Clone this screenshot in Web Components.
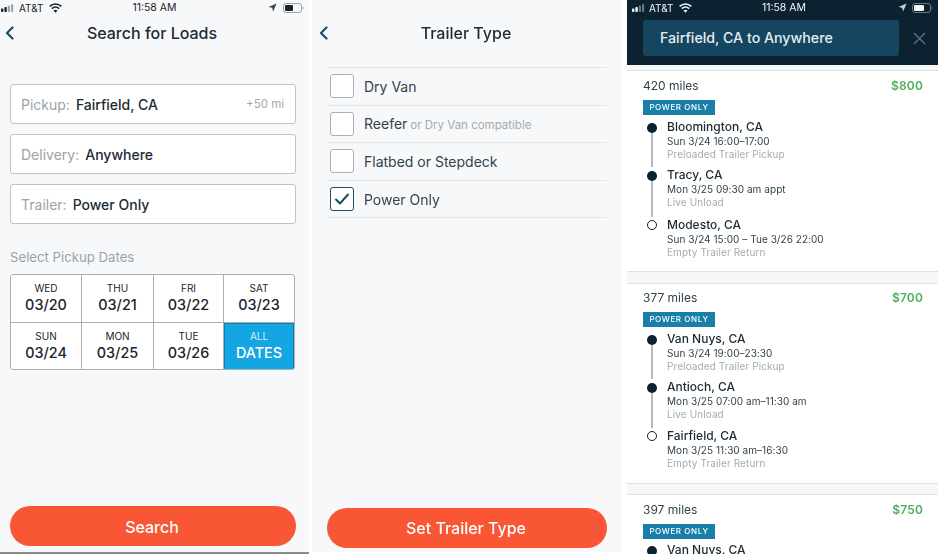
<!DOCTYPE html>
<html><head><meta charset="utf-8"><title>Loads</title>
<style>
html,body{margin:0;padding:0;background:#fff;}
body{width:938px;height:554px;overflow:hidden;font-family:Inter,"Liberation Sans",sans-serif;color:#1c2b33;}
app-row{display:flex;width:938px;height:554px;filter:blur(.35px);}
</style></head><body>
<app-row>
  <phone-pane style="--w:309px;--edge:#8a8a8a;--gap:6px;--tail:2px">
    <status-bar></status-bar>
    <nav-bar title="Search for Loads" style="--nr:5px;--cl:5px"></nav-bar>
    <field-stack>
      <field-box label="Pickup:" value="Fairfield, CA" extra="+50 mi"></field-box>
      <field-box label="Delivery:" value="Anywhere"></field-box>
      <field-box label="Trailer:" value="Power Only"></field-box>
    </field-stack>
    <date-grid>
      <date-cell day="WED" date="03/20"></date-cell><date-cell day="THU" date="03/21"></date-cell><date-cell day="FRI" date="03/22"></date-cell><date-cell day="SAT" date="03/23"></date-cell>
      <date-cell day="SUN" date="03/24"></date-cell><date-cell day="MON" date="03/25"></date-cell><date-cell day="TUE" date="03/26"></date-cell><date-cell day="ALL" date="DATES" selected></date-cell>
    </date-grid>
    <cta-button inset="10px" right="13px" style="padding-top:2px">Search</cta-button>
  </phone-pane>
  <phone-pane style="--w:310px;--ml:3px;--pane-h:552px;--gap:4px;--tail:0px">
    <div style="height:16px"></div>
    <nav-bar title="Trailer Type" style="--nr:2px;--cl:7px"></nav-bar>
    <check-list>
      <check-row label="Dry Van"></check-row>
      <check-row label="Reefer" note="or Dry Van compatible"></check-row>
      <check-row label="Flatbed or Stepdeck"></check-row>
      <check-row label="Power Only" checked></check-row>
    </check-list>
    <cta-button inset="15px" right="15px">Set Trailer Type</cta-button>
  </phone-pane>
  <results-pane style="margin-left:5px">
    <results-head></results-head>
    <load-card miles="420 miles" price="$800" style="height:202px">
      <load-stop city="Bloomington, CA" time="Sun 3/24 16:00–17:00" note="Preloaded Trailer Pickup"></load-stop>
      <load-stop city="Tracy, CA" time="Mon 3/25 09:30 am appt" note="Live Unload" style="height:50px"></load-stop>
      <load-stop city="Modesto, CA" time="Sun 3/24 15:00 – Tue 3/26 22:00" note="Empty Trailer Return" end></load-stop>
    </load-card>
    <load-card miles="377 miles" price="$700" style="--pt:6px">
      <load-stop city="Van Nuys, CA" time="Sun 3/24 19:00–23:30" note="Preloaded Trailer Pickup"></load-stop>
      <load-stop city="Antioch, CA" time="Mon 3/25 07:00 am–11:30 am" note="Live Unload"></load-stop>
      <load-stop city="Fairfield, CA" time="Mon 3/25 11:30 am–16:30" note="Empty Trailer Return" end></load-stop>
    </load-card>
    <load-card miles="397 miles" price="$750" style="margin-top:-1px;--sm:3px">
      <load-stop city="Van Nuys, CA" time="Sun 3/24 19:00–23:30" note="Preloaded Trailer Pickup"></load-stop>
    </load-card>
  </results-pane>
</app-row>
<script>
function def(name, css, html){
  customElements.define(name, class extends HTMLElement{
    connectedCallback(){
      if(this.shadowRoot) return;
      const a = k => this.getAttribute(k) ?? '';
      const r = this.attachShadow({mode:'open'});
      r.innerHTML = '<style>'+css+'</style>'+(typeof html==='function'?html(a,this):html);
    }
  });
}
def('phone-pane',`:host{display:flex;flex-direction:column;flex:none;width:var(--w);margin-left:var(--ml,0);height:var(--pane-h,554px);background:#f7f8fa;box-sizing:border-box;}
 .edge{flex:none;height:var(--tail,0);background:var(--edge,transparent);margin-top:var(--gap,5px);margin-right:0}`,`<slot></slot><div class="edge"></div>`);

const statusIcons = dark => {
  const c = dark ? '#f4f6f7' : '#1c2429';
  const bars = `<svg width="14" height="8" viewBox="0 0 14 8"><rect x="0" y="4.5" width="2.4" height="3.5" rx=".8" fill="${c}"/><rect x="3.4" y="3" width="2.4" height="5" rx=".8" fill="${c}"/><rect x="6.8" y="1.5" width="2.2" height="6.5" rx=".8" fill="${c}" opacity=".4"/><rect x="10" y="0" width="2.2" height="8" rx=".8" fill="${c}" opacity=".4"/></svg>`;
  const wifi = `<svg width="13" height="10" viewBox="0 0 13 10" fill="none" stroke="${c}" stroke-width="1.7"><path d="M.7 3.3a8.4 8.4 0 0 1 11.6 0"/><path d="M2.9 5.6a5.2 5.2 0 0 1 7.2 0"/><path d="M6.5 9.8 4.5 7.6a3 3 0 0 1 4 0Z" fill="${c}" stroke="none"/></svg>`;
  const loc = `<svg width="9" height="9" viewBox="0 0 9 9" fill="${c}" opacity=".85"><path d="M8.6.4.5 4l3.7.8.9 3.8Z"/></svg>`;
  const batt = `<svg width="21" height="10" viewBox="0 0 21 10"><rect x=".5" y=".5" width="18" height="9" rx="2.4" fill="none" stroke="${c}" stroke-opacity=".4"/><rect x="2" y="2" width="${dark?10:8}" height="6" rx="1" fill="${c}"/><path d="M19.6 3.4c1 .4 1 2.8 0 3.2Z" fill="${c}" opacity=".5"/></svg>`;
  return {bars,wifi,loc,batt};
};
def('status-bar',`:host{display:grid;grid-template-columns:1fr auto 1fr;align-items:center;height:15px;padding:0 0 1px;font-size:10.5px;color:var(--sb,#1c2429);box-sizing:content-box}
 .l{display:flex;align-items:center;padding-left:var(--sbl,1px)} .l span{font-size:10px;margin:0 5px 0 var(--sba,4px)}
 .t{padding-left:var(--sbt,0)}
 .r{display:flex;justify-content:flex-end;align-items:center;gap:var(--sbg,6px);padding-right:var(--sbr,5px)}`,
 (a,el)=>{const i=statusIcons(el.hasAttribute('dark'));return `<div class="l">${i.bars}<span>AT&amp;T</span>${i.wifi}</div><div class="t">11:58 AM</div><div class="r">${i.loc}${i.batt}</div>`});
def('nav-bar',`:host{display:flex;align-items:center;justify-content:center;position:relative;height:34px;padding-right:var(--nr,0);font-size:16px;font-weight:500;color:#1c2b33}
 svg{position:absolute;left:var(--cl,5px);top:10px}`,
 a=>`<svg width="10" height="14" viewBox="0 0 10 14" fill="none" stroke="#1b4d68" stroke-width="2.2" stroke-linecap="round" stroke-linejoin="round"><path d="M7.5 1.5 2 7l5.5 5.5"/></svg><span>${a('title')}</span>`);
def('field-stack',`:host{display:flex;flex-direction:column;gap:10px;padding:34px 13px 0 10px}`,`<slot></slot>`);
def('field-box',`:host{display:flex;align-items:center;height:40px;box-sizing:border-box;border:1px solid #bcc3c8;border-radius:3px;background:#fff;padding:0 11px 0 10px;font-size:14px}
 .l{color:#9aa3a9;margin-right:6px} .v{font-weight:500;color:#1c2b33;flex:1} .x{font-size:11.5px;color:#a4abb0}`,
 a=>`<span class="l">${a('label')}</span><span class="v">${a('value')}</span>${a('extra')?`<span class="x">${a('extra')}</span>`:''}`);
def('date-grid',`:host{display:block;padding:25px 13px 0 10px}
 .h{font-size:13.2px;color:#9aa3a9;line-height:16px;margin-bottom:9px}
 .g{display:grid;grid-template-columns:71px 72px 70px 1fr;grid-auto-rows:48px;width:285px;border:1px solid #a9b1b6;border-radius:3px;overflow:hidden;background:#fff;height:96px;box-sizing:border-box}`,
 `<div class="h">Select Pickup Dates</div><div class="g"><slot></slot></div>`);
def('date-cell',`:host{display:flex;flex-direction:column;align-items:center;justify-content:center;box-sizing:border-box;border-right:1px solid #a9b1b6;border-bottom:1px solid #a9b1b6;color:#1c2429;min-width:0;padding-bottom:1px}
 :host(:nth-child(4n)){border-right:0} :host(:nth-child(n+5)){border-bottom:0;padding-bottom:2px}
 :host([selected]){background:#14a5e3;color:#fff;box-shadow:inset 0 0 0 1px #0f7fb3}
 .d{font-size:10px;line-height:13px} .n{font-size:14.4px;line-height:19px;font-weight:500}
 :host([selected]) .d{color:#d4eefa}`,
 a=>`<span class="d">${a('day')}</span><span class="n">${a('date')}</span>`);
def('cta-button',`:host{display:flex;align-items:center;justify-content:center;flex:none;height:40px;box-sizing:border-box;padding-right:2px;margin-top:auto;margin-left:var(--i);margin-right:var(--r);border-radius:20px;background:#f95635;color:#fff;font-size:16px;font-weight:500}`,`<slot></slot>`);
document.querySelectorAll('cta-button').forEach(b=>{b.style.setProperty('--i',b.getAttribute('inset'));b.style.setProperty('--r',b.getAttribute('right'))});
def('check-list',`:host{display:block;margin:17px 15px 0 15px;border-top:1px solid #e3e6e9}`,`<slot></slot>`);
def('check-row',`:host{display:flex;align-items:center;height:37.5px;box-sizing:border-box;border-bottom:1px solid #e3e6e9;padding-left:3px;font-size:14px;color:#33434c}
 .b{width:24px;height:24px;box-sizing:border-box;border:1px solid #a9b1b6;border-radius:3px;background:#fff;margin-right:10px;flex:none;display:flex;align-items:center;justify-content:center}
 :host([checked]) .b{border-color:#1b4d68}
 :host([checked]) .lb{padding-top:2px}
 .n{font-size:11.5px;color:#a4abb0;margin:3px 0 0 3px}`,
 (a,el)=>`<span class="b">${el.hasAttribute('checked')?'<svg width="16" height="14" viewBox="0 0 16 14" fill="none" stroke="#1b4d68" stroke-width="2" stroke-linecap="round" stroke-linejoin="round"><path d="M2 7.5 6 11.5 14 2.5"/></svg>':''}</span><span class="lb">${a('label')}</span>${a('note')?`<span class="n">${a('note')}</span>`:''}`);
def('results-pane',`:host{display:flex;flex-direction:column;flex:none;width:311px;height:554px;overflow:hidden;background:#f6f7f9;gap:11px}`,`<slot></slot>`);
def('results-head',`:host{display:block;flex:none;height:65px;background:#0c2230;color:#fff;--sb:#f4f6f7;--sbl:5px;--sbr:5px;--sbg:5px;--sba:3px;--sbt:3px;margin-bottom:-6px;box-sizing:border-box}
 .row{display:flex;align-items:center;padding:4px 0 0 16px}
 .s{width:256px;height:36px;background:#15455f;border-radius:3px;display:flex;align-items:center;padding:0 0 1px 17px;box-sizing:border-box;font-size:14.2px;font-weight:500;color:#e6edf1}
 svg{margin-left:14px}`,
 `<status-bar dark></status-bar><div class="row"><div class="s">Fairfield, CA to Anywhere</div><svg width="13" height="13" viewBox="0 0 13 13" stroke="#54707f" stroke-width="1.5"><path d="M1 1l11 11M12 1 1 12"/></svg></div>`);
def('load-card',`:host{display:block;flex:none;height:201px;box-sizing:border-box;background:#fff;border-top:1px solid #dfe2e5;border-bottom:1px solid #dfe2e5;padding:var(--pt,7px) 15px 0 16px}
 .t{display:flex;justify-content:space-between;align-items:center;height:15px;font-size:12px;color:#33434c}
 .p{color:#4cae5b;font-weight:600;font-size:12px;letter-spacing:.15px}
 .b{display:block;margin-top:7px;width:72px;height:15px;line-height:15px;text-align:center;background:#1a7fa8;color:#fff;font-size:8px;font-weight:500;letter-spacing:.6px}
 .s{margin-top:var(--sm,4px)}`,
 a=>`<div class="t"><span>${a('miles')}</span><span class="p">${a('price')}</span></div><div class="b">POWER ONLY</div><div class="s"><slot></slot></div>`);
def('load-stop',`:host{display:flex;height:49px;gap:9px}
 :host(:first-child){height:48px}
 .rail{width:12px;flex:none;display:flex;flex-direction:column;align-items:center;margin-left:3px}
 .dot{width:10px;height:10px;border-radius:50%;background:#0c2230;flex:none;box-sizing:border-box;margin-top:4px}
 :host([end]) .dot{background:#fff;border:1.7px solid #0c2230;margin-top:3px}
 .line{flex:1;width:1.2px;background:#b4bbc0}
 :host([end]) .line{display:none}
 .c{font-size:12px;font-weight:500;line-height:15px;color:#1c2b33}
 .m{font-size:10px;line-height:14px;color:#33434c;letter-spacing:.05px}
 .o{font-size:10px;line-height:13px;color:#a4abb0;letter-spacing:.1px}`,
 a=>`<div class="rail"><div class="dot"></div><div class="line"></div></div><div><div class="c">${a('city')}</div><div class="m">${a('time')}</div><div class="o">${a('note')}</div></div>`);
</script>
</body></html>
